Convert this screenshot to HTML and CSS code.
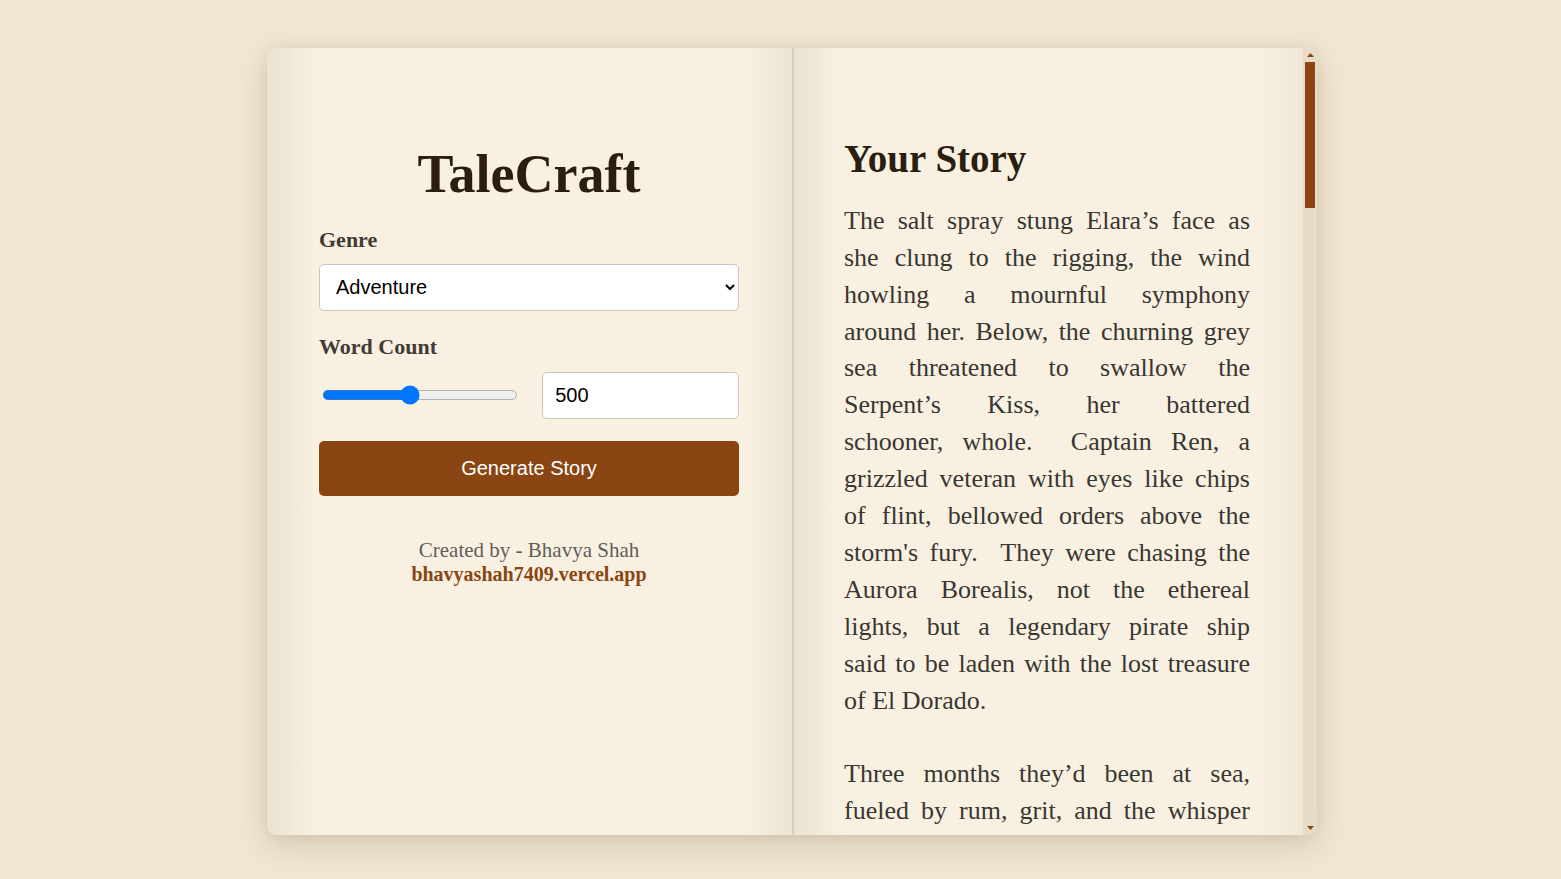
FILE: index.html
```html
<!DOCTYPE html>
<html lang="en">
<head>
<meta charset="utf-8">
<title>TaleCraft</title>
<link rel="stylesheet" href="styles.css">
</head>
<body>
<div class="book">
  <section class="page page-left">
    <h1 class="title">TaleCraft</h1>
    <form class="form">
      <label class="field-label" for="genre">Genre</label>
      <select id="genre" class="select">
        <option>Adventure</option>
        <option>Fantasy</option>
        <option>Mystery</option>
        <option>Science Fiction</option>
        <option>Romance</option>
        <option>Horror</option>
      </select>
      <label class="field-label" for="count">Word Count</label>
      <div class="count-row">
        <input class="range" type="range" min="100" max="1000" step="50" value="500" aria-label="Word count slider">
        <input id="count" class="number" type="number" value="500">
      </div>
      <button type="button" class="generate">Generate Story</button>
    </form>
    <footer class="credit">
      <div class="credit-by">Created by - Bhavya Shah</div>
      <a class="credit-link" href="#">bhavyashah7409.vercel.app</a>
    </footer>
  </section>
  <section class="page page-right">
    <div class="story-scroll">
      <h2 class="story-title">Your Story</h2>
      <div class="story">
        <p>
          <span class="ln">The salt spray stung Elara’s face as</span>
          <span class="ln">she clung to the rigging, the wind</span>
          <span class="ln">howling a mournful symphony</span>
          <span class="ln">around her. Below, the churning grey</span>
          <span class="ln">sea threatened to swallow the</span>
          <span class="ln">Serpent’s Kiss, her battered</span>
          <span class="ln">schooner, whole.  Captain Ren, a</span>
          <span class="ln">grizzled veteran with eyes like chips</span>
          <span class="ln">of flint, bellowed orders above the</span>
          <span class="ln">storm's fury.  They were chasing the</span>
          <span class="ln">Aurora Borealis, not the ethereal</span>
          <span class="ln">lights, but a legendary pirate ship</span>
          <span class="ln">said to be laden with the lost treasure</span>
          <span class="ln last">of El Dorado.</span>
        </p>
        <p>
          <span class="ln">Three months they’d been at sea,</span>
          <span class="ln">fueled by rum, grit, and the whisper</span>
          of a map Elara had won in a card game in the back room of a Tortuga tavern. The parchment was cracked and stained with salt, but the markings were unmistakable: a jagged coastline, a river that curled like a serpent, and a single crimson cross inked beside the words Ciudad de Oro.
        </p>
        <p>“Land ho!” The cry came from the crow’s nest, thin and ragged against the wind. Elara squinted through the curtain of rain and saw it — a dark smudge on the horizon, crowned with jungle and wreathed in mist. Her heart hammered against her ribs. After all the storms, the mutinies, and the long nights of doubt, the island was real.</p>
        <p>Captain Ren lowered his spyglass, a rare smile cracking the weathered leather of his face. “Ready the longboat,” he ordered. “We go ashore at first light. And keep your blades close, lads. Where there’s gold, there’s always someone willing to bleed for it.”</p>
        <p>Dawn broke pale and golden over the cove. The crew rowed through water so clear that Elara could see schools of silver fish darting between coral towers. On the beach, the sand was white as bone, and the jungle beyond hummed with the calls of unseen birds. She unrolled the map, matched its lines to the cliffs above, and pointed inland toward a ridge shaped like a sleeping giant.</p>
        <p>The trek was brutal. Vines clawed at their arms, mosquitoes swarmed in clouds, and twice they were forced to cross rivers swollen by the storm. On the third day, they found the first sign that others had come before them: a rusted cutlass driven into the trunk of a great kapok tree, its hilt wrapped in a faded red sash. Ren’s jaw tightened. “Blackwood’s men,” he muttered. “The Aurora’s crew.”</p>
        <p>That night, as the fire crackled and the jungle whispered, Elara studied the map by its flickering light. She noticed something she had missed before — faint lines beneath the ink, visible only when the parchment was held against the flame. A second path, hidden beneath the first, leading not to the ridge but to a waterfall deep in the valley below.</p>
        <p>They reached the falls at noon the next day. Behind the thundering curtain of water lay a cavern, its walls glittering with veins of quartz. Deep inside, half buried in silt, rested the broken hull of a ship — the Aurora Borealis herself, dragged there by some impossible flood. And in her hold, gleaming in the torchlight, lay chest after chest of gold.</p>
        <p>Elara laughed, the sound echoing off the stone. The legend was true. But as the crew surged forward, she heard the click of a pistol behind her, and she knew their greatest battle was only beginning.</p>
      </div>
    </div>
    <div class="scrollbar" aria-hidden="true">
      <div class="sb-btn"><svg width="7" height="4" viewBox="0 0 7 4"><polygon points="0,4 3.5,0 7,4" fill="#8b4513"/></svg></div>
      <div class="sb-thumb"></div>
      <div class="sb-track"></div>
      <div class="sb-btn"><svg width="7" height="4" viewBox="0 0 7 4"><polygon points="0,0 7,0 3.5,4" fill="#8b4513"/></svg></div>
    </div>
  </section>
</div>
</body>
</html>
```
FILE: styles.css
```css
* {
  box-sizing: border-box;
}

html, body {
  height: 100%;
}

body {
  margin: 0;
  background: #f1e6d3;
  font-family: "Liberation Serif", "Times New Roman", serif;
  display: flex;
  align-items: center;
  justify-content: center;
  padding: 4px 0 0 23px;
}

.book {
  width: 1050px;
  height: 787px;
  display: flex;
  border-radius: 10px;
  overflow: hidden;
  background: #f8f1e2;
  box-shadow: 0 10px 30px rgba(70, 45, 10, 0.16), 0 0 12px rgba(70, 45, 10, 0.06);
}

.page {
  height: 100%;
}

.page-left {
  width: 527px;
  flex: 0 0 527px;
  border-right: 2px solid #d7cdbd;
  padding: 94px 53px 0 52px;
  background: linear-gradient(90deg, #ebe2cf 0, #f8f1e2 48px, #f8f1e2 calc(100% - 48px), #ede4d2 100%);
}

.title {
  margin: 0 0 20px;
  font-size: 54px;
  line-height: 1.2;
  font-weight: bold;
  text-align: center;
  color: #2b1d0f;
}

.form {
  display: flex;
  flex-direction: column;
}

.field-label {
  display: block;
  font-size: 22px;
  line-height: 26px;
  font-weight: bold;
  color: #403b36;
  margin-bottom: 11px;
}

.select {
  height: 47px;
  width: 100%;
  margin-bottom: 23px;
  padding: 0 10px 0 12px;
  font-family: "Liberation Sans", Arial, sans-serif;
  font-size: 20px;
  color: #000;
  background: #fff;
  border: 1px solid #cbc6bf;
  border-radius: 5px;
}

.count-row {
  display: flex;
  align-items: center;
  gap: 22px;
  height: 47px;
  margin-top: 1px;
  margin-bottom: 22px;
}

.range {
  zoom: 1.25;
  width: 157px;
  flex: 0 0 auto;
  accent-color: #0075ff;
}

.number {
  flex: 1 1 0;
  min-width: 0;
  width: 0;
  height: 47px;
  padding: 0 12px;
  font-family: "Liberation Sans", Arial, sans-serif;
  font-size: 20px;
  color: #000;
  background: #fff;
  border: 1px solid #cbc6bf;
  border-radius: 5px;
}

.generate {
  height: 55px;
  width: 100%;
  border: none;
  border-radius: 5px;
  background: #8b4513;
  color: #fff;
  font-family: "Liberation Sans", Arial, sans-serif;
  font-size: 20px;
  cursor: pointer;
}

.credit {
  margin-top: 42px;
  text-align: center;
  font-size: 21px;
  line-height: 24px;
}

.credit-by {
  color: #625c56;
}

.credit-link {
  color: #8b4513;
  font-size: 20px;
  font-weight: bold;
  text-decoration: none;
}

.page-right {
  flex: 1;
  min-width: 0;
  display: flex;
}

.story-scroll {
  flex: 1;
  min-width: 0;
  height: 100%;
  overflow-y: auto;
  scrollbar-width: none;
  padding: 88px 53px 50px 50px;
  background: linear-gradient(90deg, #ebe2cf 0, #f8f1e2 48px, #f8f1e2 calc(100% - 48px), #f1e8d7 100%);
}

.story-title {
  margin: 0 0 20px;
  font-size: 39px;
  line-height: 1.2;
  font-weight: bold;
  color: #2b1d0f;
}

.story {
  font-size: 26px;
  line-height: 36.9px;
  color: #3a3632;
  text-align: justify;
}

.story p {
  margin: 0 0 36.9px;
}

.ln {
  display: block;
  white-space: pre-wrap;
  text-align: justify;
  text-align-last: justify;
}

.ln.last {
  text-align-last: left;
}

.scrollbar {
  flex: 0 0 14px;
  width: 14px;
  height: 100%;
  display: flex;
  flex-direction: column;
  background: #e8dcc8;
}

.sb-btn {
  height: 14px;
  flex: 0 0 14px;
  display: flex;
  align-items: center;
  justify-content: center;
}

.sb-thumb {
  height: 146px;
  flex: 0 0 146px;
  margin: 0 2px;
  background: #8b4513;
}

.sb-track {
  flex: 1;
}
```
